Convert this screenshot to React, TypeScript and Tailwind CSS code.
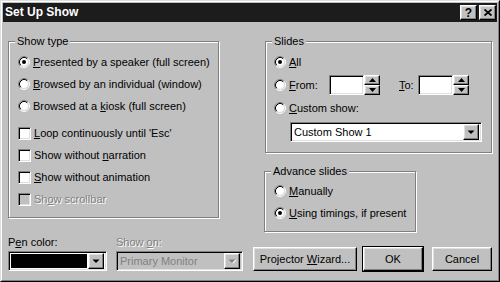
import type { ReactNode } from "react";

const raised =
  "border border-t-white border-l-white border-r-black border-b-black shadow-[inset_-1px_-1px_0_#808080,inset_1px_1px_0_#dfdfdf] bg-[#c0c0c0]";
const sunken =
  "border border-t-[#808080] border-l-[#808080] border-r-white border-b-white shadow-[inset_1px_1px_0_#000,inset_-1px_-1px_0_#dfdfdf]";

function Radio({ checked }: { checked?: boolean }) {
  return (
    <svg width="12" height="12" viewBox="0 0 12 12" className="shrink-0">
      <circle cx="6" cy="6" r="4" fill="#fff" />
      <path d="M2.11 9.89A5.5 5.5 0 0 1 9.89 2.11" stroke="#808080" fill="none" />
      <path d="M9.89 2.11A5.5 5.5 0 0 1 2.11 9.89" stroke="#fff" fill="none" />
      <path d="M2.82 9.18A4.5 4.5 0 0 1 9.18 2.82" stroke="#000" fill="none" />
      <path d="M9.18 2.82A4.5 4.5 0 0 1 2.82 9.18" stroke="#dfdfdf" fill="none" />
      {checked && <circle cx="6" cy="6" r="2" fill="#000" />}
    </svg>
  );
}

function Check({ disabled }: { disabled?: boolean }) {
  return (
    <span
      className={`${sunken} block w-[13px] h-[13px] shrink-0 ${
        disabled ? "bg-[#c0c0c0]" : "bg-white"
      }`}
    />
  );
}

function Arrow({ disabled }: { disabled?: boolean }) {
  return (
    <svg width="8" height="5" viewBox="0 0 8 5">
      {disabled && <path d="M1.5 1H8.5L5 4.5z" fill="#fff" />}
      <path d="M0.5 0.5H7.5L4 4z" fill={disabled ? "#808080" : "#000"} />
    </svg>
  );
}

function DropButton({ disabled }: { disabled?: boolean }) {
  return (
    <div className={`${raised} w-[16px] h-[16px] shrink-0 flex items-center justify-center`}>
      <Arrow disabled={disabled} />
    </div>
  );
}

function Spin() {
  return (
    <div className="flex flex-col w-[16px] h-[20px]">
      <div className={`${raised} h-[10px] flex items-center justify-center`}>
        <svg width="7" height="4" viewBox="0 0 7 4">
          <path d="M3.5 0L7 4H0z" fill="#000" />
        </svg>
      </div>
      <div className={`${raised} h-[10px] flex items-center justify-center`}>
        <svg width="7" height="4" viewBox="0 0 7 4">
          <path d="M0 0H7L3.5 4z" fill="#000" />
        </svg>
      </div>
    </div>
  );
}

function Row({
  kind,
  checked,
  disabled,
  children,
}: {
  kind: "radio" | "check";
  checked?: boolean;
  disabled?: boolean;
  children: ReactNode;
}) {
  return (
    <div className="h-[22px] flex items-center gap-[3px]">
      {kind === "radio" ? <Radio checked={checked} /> : <Check disabled={disabled} />}
      <span
        className={
          disabled ? "text-[#808080] [text-shadow:1px_1px_0_#fff]" : "text-black"
        }
      >
        {children}
      </span>
    </div>
  );
}

function Group({
  title,
  className,
  children,
}: {
  title: string;
  className?: string;
  children: ReactNode;
}) {
  return (
    <fieldset
      className={`border border-[#808080] shadow-[1px_1px_0_#fff,inset_1px_1px_0_#fff] ${className ?? ""}`}
    >
      <legend className="ml-[6px] px-[2px] bg-[#c0c0c0] leading-[13px]">{title}</legend>
      {children}
    </fieldset>
  );
}

export default function App() {
  return (
    <div className="w-[500px] h-[282px] bg-[#c0c0c0] border border-t-[#dfdfdf] border-l-[#dfdfdf] border-r-black border-b-black font-['Liberation_Sans',Arial,sans-serif] text-[11px] leading-[13px] text-black overflow-hidden">
      <div className="h-full border border-t-white border-l-white border-r-[#808080] border-b-[#808080] p-[1px] flex flex-col">
        {/* title bar */}
        <div className="h-[19px] bg-[#1c1c1c] flex items-center justify-between pl-[2px] pr-[1px]">
          <span className="text-white font-bold text-[12px]">Set Up Show</span>
          <div className="flex gap-[2px]">
            <div className={`${raised} w-[17px] h-[15px] flex items-center justify-center font-bold text-[12px] leading-none`}>
              ?
            </div>
            <div className={`${raised} w-[17px] h-[15px] flex items-center justify-center`}>
              <svg width="8" height="7" viewBox="0 0 8 7">
                <path d="M0.5 0.5L7.5 6.5M7.5 0.5L0.5 6.5" stroke="#000" strokeWidth="1.8" />
              </svg>
            </div>
          </div>
        </div>

        <div className="flex flex-col px-[5px]">
          <div className="flex mt-[13px]">
            {/* Show type */}
            <Group title="Show type" className="w-[211px] self-start">
              <div className="pl-[9px] pt-[3px] pb-[7px]">
                <Row kind="radio" checked>
                  <u>P</u>resented by a speaker (full screen)
                </Row>
                <Row kind="radio">
                  <u>B</u>rowsed by an individual (window)
                </Row>
                <Row kind="radio">
                  Browsed at a <u>k</u>iosk (full screen)
                </Row>
                <div className="mt-[5px]">
                  <Row kind="check">
                    <u>L</u>oop continuously until 'Esc'
                  </Row>
                  <Row kind="check">
                    Show without <u>n</u>arration
                  </Row>
                  <Row kind="check">
                    <u>S</u>how without animation
                  </Row>
                  <Row kind="check" disabled>
                    Sh<u>o</u>w scrollbar
                  </Row>
                </div>
              </div>
            </Group>

            <div className="flex flex-col ml-[46px]">
              {/* Slides */}
              <Group title="Slides" className="w-[227px]">
                <div className="pl-[8px] pt-[3px] pb-[10px]">
                  <Row kind="radio" checked>
                    <u>A</u>ll
                  </Row>
                  <div className="h-[24px] flex items-center">
                    <Radio />
                    <span className="ml-[3px] w-[40px]">
                      <u>F</u>rom:
                    </span>
                    <div className={`${sunken} bg-white w-[35px] h-[20px]`} />
                    <Spin />
                    <span className="ml-[19px] w-[19px]">
                      <u>T</u>o:
                    </span>
                    <div className={`${sunken} bg-white w-[35px] h-[20px]`} />
                    <Spin />
                  </div>
                  <Row kind="radio">
                    <u>C</u>ustom show:
                  </Row>
                  <div className={`${sunken} bg-white ml-[16px] mt-[3px] w-[192px] h-[20px] flex items-center justify-between pl-[3px] pr-[2px]`}>
                    <span>Custom Show 1</span>
                    <DropButton />
                  </div>
                </div>
              </Group>

              {/* Advance slides */}
              <Group title="Advance slides" className="w-[152px] mt-[12px] -ml-[1px]">
                <div className="pl-[9px] pt-[2px] pb-[7px]">
                  <Row kind="radio">
                    <u>M</u>anually
                  </Row>
                  <Row kind="radio" checked>
                    <u>U</u>sing timings, if present
                  </Row>
                </div>
              </Group>
            </div>
          </div>

          {/* bottom row */}
          <div className="flex items-end mt-[4px]">
            <div className="flex flex-col w-[99px]">
              <span>
                P<u>e</u>n color:
              </span>
              <div className={`${sunken} bg-white mt-[2px] h-[20px] flex items-center pl-[2px] pr-[2px] gap-[1px]`}>
                <div className="flex-1 h-[14px] bg-black" />
                <DropButton />
              </div>
            </div>
            <div className="flex flex-col w-[127px] ml-[9px]">
              <span className="text-[#808080] [text-shadow:1px_1px_0_#fff]">
                Show <u>o</u>n:
              </span>
              <div className={`${sunken} bg-[#c0c0c0] mt-[2px] h-[20px] flex items-center justify-between pl-[3px] pr-[2px]`}>
                <span className="text-[#808080]">Primary Monitor</span>
                <DropButton disabled />
              </div>
            </div>
            <button className={`${raised} ml-[10px] w-[104px] h-[24px] flex items-center justify-center`}>
              <span>
                Projector <u>W</u>izard...
              </span>
            </button>
            <div className="ml-[5px] w-[62px] h-[26px] border border-black -mb-[1px]">
              <button className={`${raised} w-full h-full flex items-center justify-center`}>
                OK
              </button>
            </div>
            <button className={`${raised} ml-[8px] w-[60px] h-[24px] flex items-center justify-center`}>
              Cancel
            </button>
          </div>
        </div>
      </div>
    </div>
  );
}
